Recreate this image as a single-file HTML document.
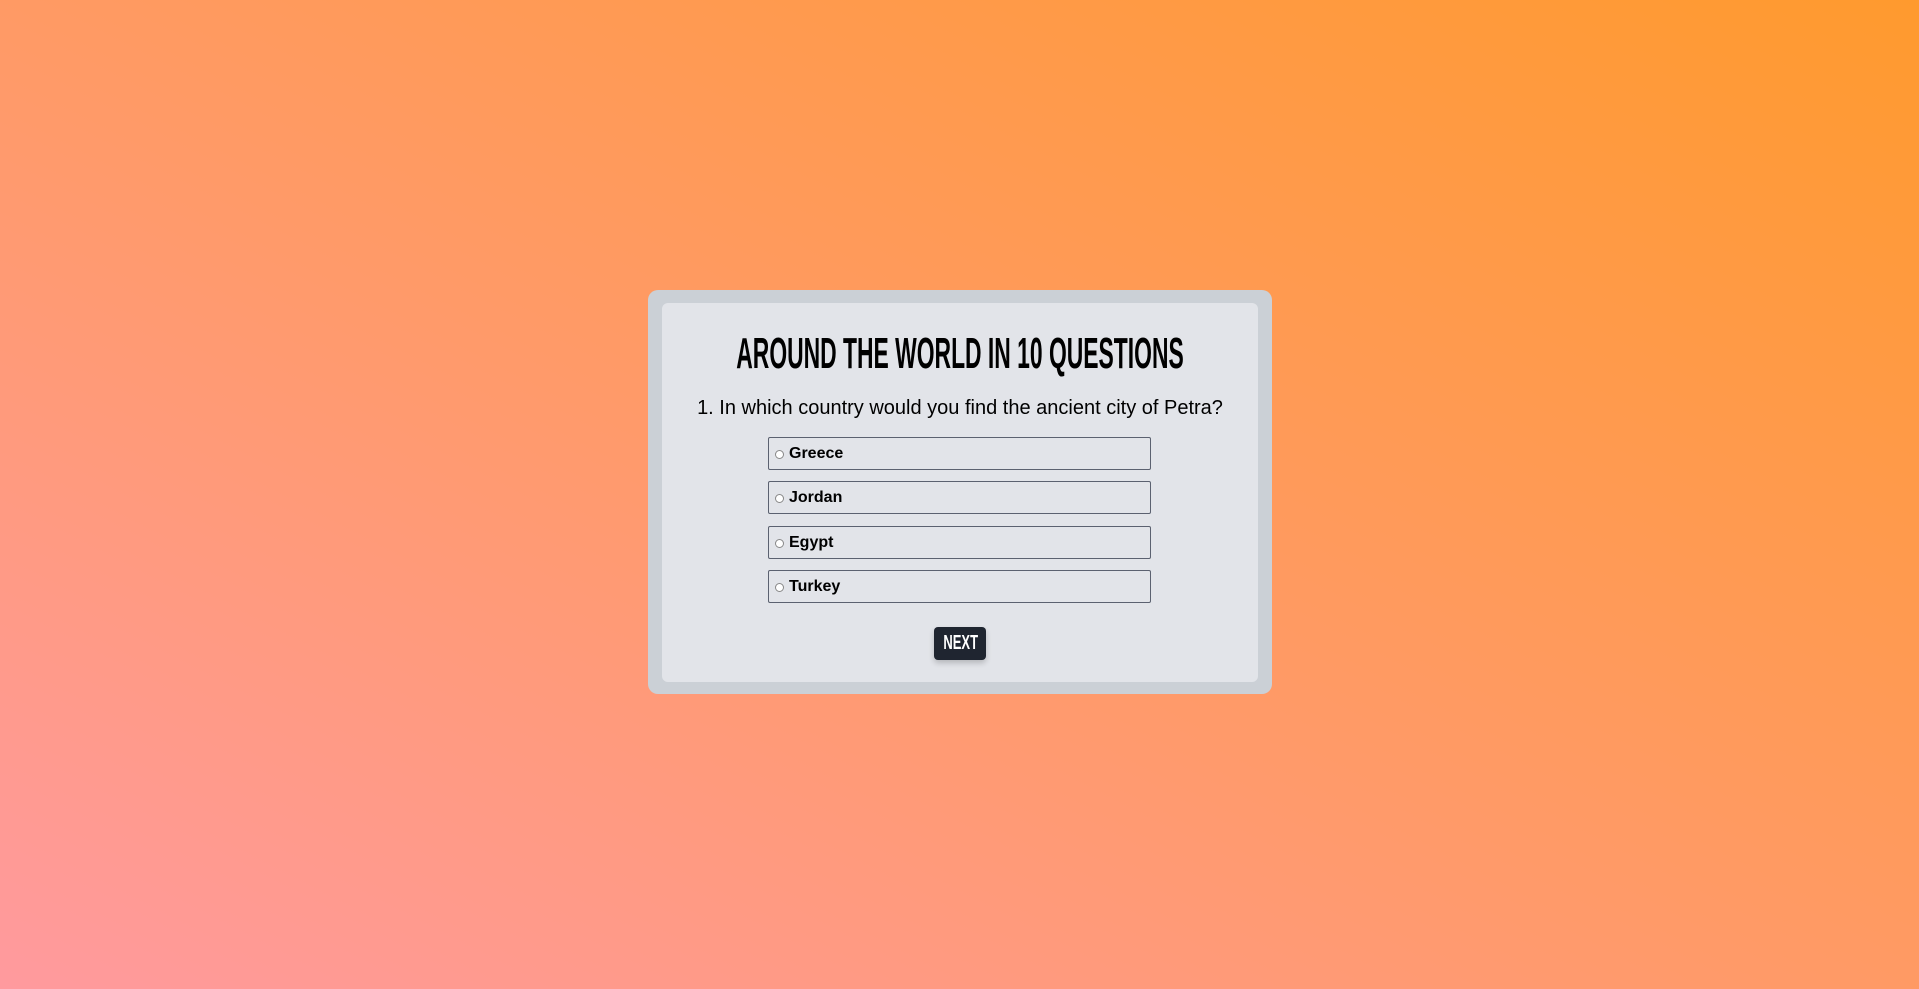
<!DOCTYPE html>
<html><head><meta charset="utf-8"><style>
html,body{margin:0;padding:0;width:1919px;height:989px;overflow:hidden}
body{background:linear-gradient(to top right,#ff9a9e 0%,#ff9a6a 45%,#ff9a2e 100%);font-family:"Liberation Sans",sans-serif;position:relative}
.outer{position:absolute;left:648px;top:290px;width:624px;height:404px;background:#cbd0d6;border-radius:10px}
.inner{position:absolute;left:14px;top:13px;width:596px;height:379px;background:#e2e4e9;border-radius:6px}
h1{position:absolute;left:50%;top:27px;margin:0;white-space:nowrap;font-size:44px;font-weight:bold;line-height:48px;color:#000;transform:translateX(-50%) scaleX(0.52);letter-spacing:0px}
.q{position:absolute;left:0;width:596px;top:92px;text-align:center;font-size:20px;color:#000;line-height:26px}
.opt{position:absolute;left:106px;width:381px;height:31px;border:1px solid #5b6170;border-radius:2px;box-sizing:content-box}
.opt .r{position:absolute;left:6px;top:12px;width:7px;height:7px;border:1px solid #888;border-radius:50%;background:#fff}
.opt span{position:absolute;left:20px;top:7px;font-size:16px;font-weight:bold;color:#000}
.btn{position:absolute;left:272px;top:324px;width:52px;height:33px;background:#1f2530;border-radius:4px;color:#fff;font-weight:bold;font-size:20px;line-height:33px;text-align:center;box-shadow:0 3px 6px rgba(0,0,0,.2)}
.btn b{display:inline-block;transform:scaleX(.65)}
</style></head><body>
<div class="outer"><div class="inner">
<h1>AROUND THE WORLD IN 10 QUESTIONS</h1>
<div class="q">1. In which country would you find the ancient city of Petra?</div>
<div class="opt" style="top:134px"><div class="r"></div><span>Greece</span></div>
<div class="opt" style="top:178px"><div class="r"></div><span>Jordan</span></div>
<div class="opt" style="top:223px"><div class="r"></div><span>Egypt</span></div>
<div class="opt" style="top:267px"><div class="r"></div><span>Turkey</span></div>
<div class="btn"><b>NEXT</b></div>
</div></div>
</body></html>
